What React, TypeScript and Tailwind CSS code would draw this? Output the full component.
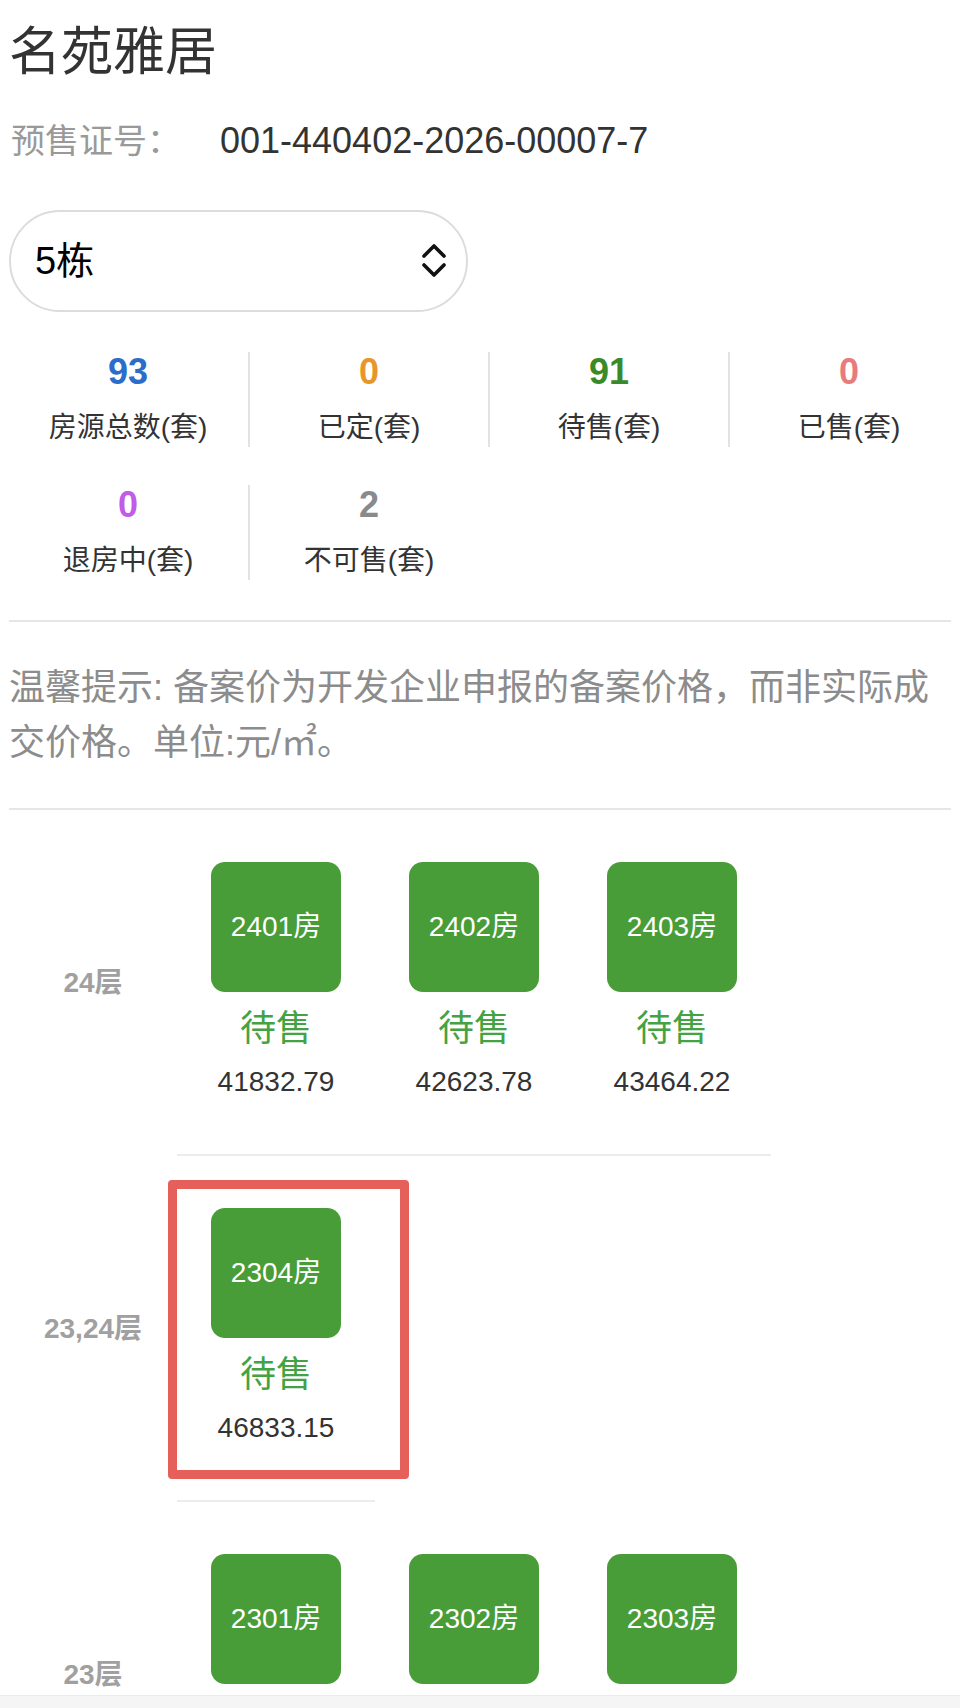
import React from "react";

type Stat = { value: string; label: string; color: string };

const STATS: Stat[] = [
  { value: "93", label: "房源总数(套)", color: "text-[#2c6dc9]" },
  { value: "0", label: "已定(套)", color: "text-[#e8952c]" },
  { value: "91", label: "待售(套)", color: "text-[#3b8a29]" },
  { value: "0", label: "已售(套)", color: "text-[#e87c7c]" },
  { value: "0", label: "退房中(套)", color: "text-[#c25be8]" },
  { value: "2", label: "不可售(套)", color: "text-[#8a8a8a]" },
];

type Room = { no: string; price?: string; marked?: boolean };
type Floor = { label: string; rooms: Room[] };

// the 23层 row runs past the bottom of the screen, so only its room boxes show
const FLOORS: Floor[] = [
  {
    label: "24层",
    rooms: [
      { no: "2401", price: "41832.79" },
      { no: "2402", price: "42623.78" },
      { no: "2403", price: "43464.22" },
    ],
  },
  { label: "23,24层", rooms: [{ no: "2304", price: "46833.15", marked: true }] },
  {
    label: "23层",
    rooms: [{ no: "2301" }, { no: "2302" }, { no: "2303" }],
  },
];

function UpDownIcon() {
  return (
    <svg width="24" height="34" viewBox="0 0 24 34" fill="none" stroke="#111" strokeWidth="3.6" strokeLinecap="round" strokeLinejoin="round">
      <path d="M2 12 L12 2 L22 12" />
      <path d="M2 21 L12 31 L22 21" />
    </svg>
  );
}

function RoomCell({ room }: { room: Room }) {
  return (
    <div className="relative flex w-[198px] flex-col items-center border-b-2 border-[#ececec] pt-[52px] pb-[52px]">
      <div className="flex h-[130px] w-[130px] items-center justify-center rounded-[14px] bg-[#489d38] text-[28px] text-white">
        {room.no}房
      </div>
      <div className="mt-[12px] h-[50px] text-[36px] leading-[50px] text-[#43a343]">{room.price ? "待售" : ""}</div>
      <div className="mt-[8px] h-[40px] text-[28px] leading-[40px] text-[#333]">{room.price}</div>
      {room.marked && (
        <div className="absolute left-[-9px] top-[24px] h-[299px] w-[241px] rounded-[4px] border-[9px] border-[#e5605a]" />
      )}
    </div>
  );
}

export default function App() {
  return (
    <div className="relative h-[1708px] w-[960px] overflow-hidden bg-white px-[9px] font-['Liberation_Sans','Noto_Sans_CJK_SC',sans-serif] text-[#333]">
      <h1 className="mt-[17px] text-[52px] leading-[70px] font-normal text-[#333]">名苑雅居</h1>

      <div className="mt-[29px] flex h-[50px] items-center">
        <span className="w-[211px] pl-[2px] text-[34px] text-[#999]">预售证号：</span>
        <span className="text-[36px] text-[#333]">001-440402-2026-00007-7</span>
      </div>

      <div className="mt-[44px] flex h-[102px] w-[459px] items-center justify-between rounded-full border-2 border-[#dcdcdc] pr-[20px] pl-[24px]">
        <span className="text-[38px] text-black">5栋</span>
        <UpDownIcon />
      </div>

      <div className="mt-[40px] -ml-[1px] grid w-[960px] grid-cols-[repeat(4,240px)] gap-y-[38px]">
        {STATS.map((s, i) => (
          <div
            key={s.label}
            className={
              i % 4 === 0
                ? "flex h-[95px] flex-col items-center"
                : "flex h-[95px] flex-col items-center border-l-2 border-[#e2e2e2]"
            }
          >
            <div className={`text-[36px] leading-[40px] font-bold ${s.color}`}>{s.value}</div>
            <div className="mt-[16px] text-[28px] leading-[40px] text-[#333]">{s.label}</div>
          </div>
        ))}
      </div>

      <div className="mt-[40px] border-t-2 border-[#e6e6e6]" />

      <p className="mt-[38px] mb-[38px] text-[36px] leading-[55px] text-[#8c8c8c]">
        温馨提示: 备案价为开发企业申报的备案价格，而非实际成交价格。单位:元/㎡。
      </p>

      <div className="border-t-2 border-[#e6e6e6]" />

      <div className="flex flex-col">
        {FLOORS.map((floor) => (
          <div key={floor.label} className="flex">
            <div className="flex w-[168px] shrink-0 items-center justify-center text-[28px] font-bold text-[#a0a0a0]">
              {floor.label}
            </div>
            <div className="flex flex-wrap">
              {floor.rooms.map((room) => (
                <RoomCell key={room.no} room={room} />
              ))}
            </div>
          </div>
        ))}
      </div>

      <div className="absolute right-0 bottom-0 left-0 h-[13px] border-t border-[#ececec] bg-[#f5f5f5]" />
    </div>
  );
}
